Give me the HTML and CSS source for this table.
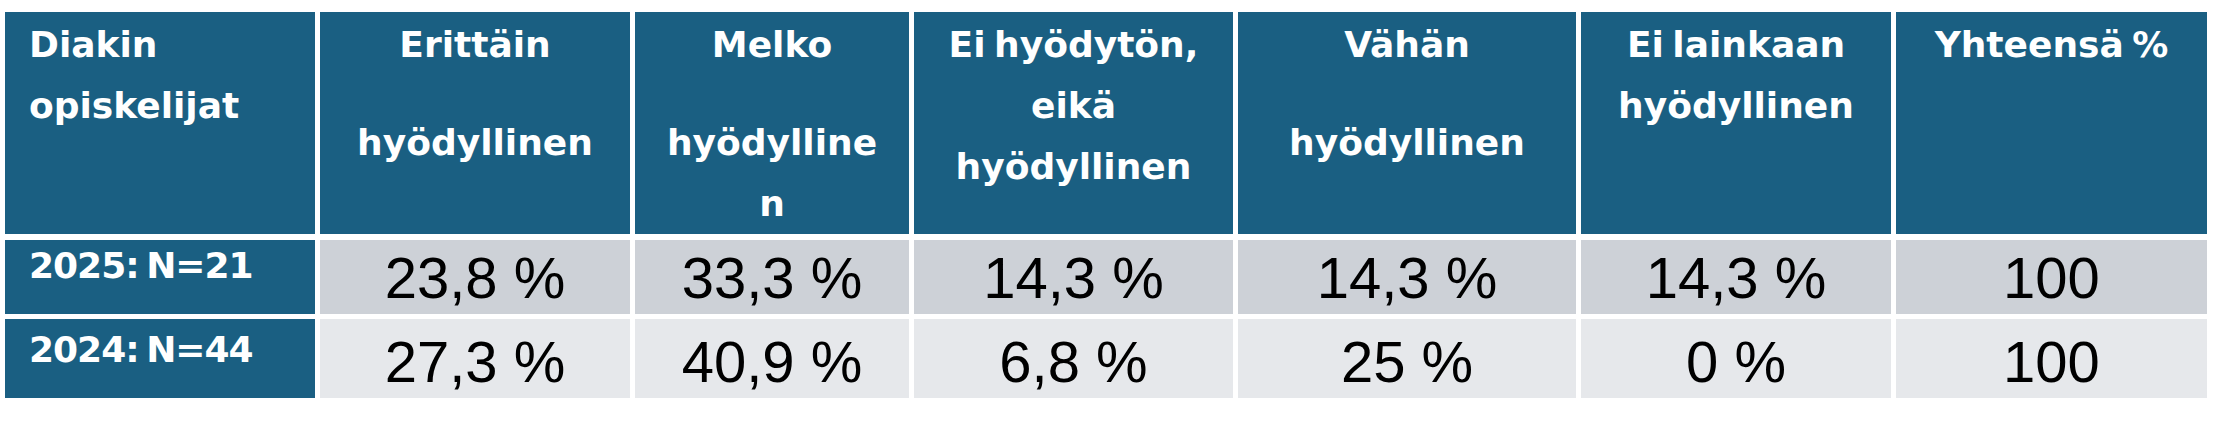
FILE: index.html
```html
<!DOCTYPE html>
<html lang="fi">
<head>
  <meta charset="UTF-8" />
  <meta name="viewport" content="width=device-width, initial-scale=1.0" />
  <title>Diakin opiskelijat</title>
  <link rel="stylesheet" href="styles.css">
</head>
<body>

  <div class="table">
    <div class="row head">
      <div class="cell label">Diakin<br>opiskelijat</div>
      <div class="cell"><span>Erittäin</span><span class="spaced">hyödyllinen</span></div>
      <div class="cell"><span>Melko</span><span class="spaced">hyödylline</span><span>n</span></div>
      <div class="cell"><span>Ei hyödytön,</span><span>eikä</span><span>hyödyllinen</span></div>
      <div class="cell"><span>Vähän</span><span class="spaced">hyödyllinen</span></div>
      <div class="cell"><span>Ei lainkaan</span><span>hyödyllinen</span></div>
      <div class="cell"><span>Yhteensä %</span></div>
    </div>

    <div class="row data odd">
      <div class="cell label">2025: N=21</div>
      <div class="cell">23,8 %</div>
      <div class="cell">33,3 %</div>
      <div class="cell">14,3 %</div>
      <div class="cell">14,3 %</div>
      <div class="cell">14,3 %</div>
      <div class="cell">100</div>
    </div>

    <div class="row data even">
      <div class="cell label">2024: N=44</div>
      <div class="cell">27,3 %</div>
      <div class="cell">40,9 %</div>
      <div class="cell">6,8 %</div>
      <div class="cell">25 %</div>
      <div class="cell">0 %</div>
      <div class="cell">100</div>
    </div>
  </div>

</body>
</html>
```

FILE: styles.css
```css
body {
  margin: 0;
  background: #fff;
  font-family: "Liberation Sans", Arial, sans-serif;
}
.table {
  display: flex;
  flex-direction: column;
  gap: 5px;
  padding: 12px 0 0 5px;
}
.row {
  display: grid;
  grid-template-columns: 310px 310px 274px 319px 338px 310px 311px;
  column-gap: 5px;
}
.head {
  height: 214px;
  margin-bottom: 9px;
}
.head .cell {
  display: flex;
  flex-direction: column;
  align-items: center;
  padding-top: 2px;
  background: #1a5f82;
  color: #fff;
  font-family: "DejaVu Sans", sans-serif;
  font-weight: bold;
  font-size: 36px;
  line-height: 61px;
  word-spacing: -4px;
  white-space: nowrap;
}
.head .spaced {
  margin-top: 37px;
}
.head .cell.label {
  display: block;
  padding-left: 24px;
}
.data {
  height: 74px;
}
.data.even {
  height: 79px;
}
.data .cell {
  display: flex;
  align-items: flex-end;
  justify-content: center;
  padding-bottom: 7px;
  font-size: 58px;
  line-height: 58px;
  color: #000;
}
.data.odd .cell {
  background: #cdd1d7;
}
.data.even .cell {
  background: #e6e8eb;
}
.data .cell.label {
  justify-content: flex-start;
  padding: 0 0 26px 24px;
  background: #1a5f82;
  color: #fff;
  font-family: "DejaVu Sans", sans-serif;
  font-weight: bold;
  font-size: 36px;
  line-height: 44px;
  letter-spacing: -1px;
  word-spacing: -4px;
  white-space: nowrap;
}
```
